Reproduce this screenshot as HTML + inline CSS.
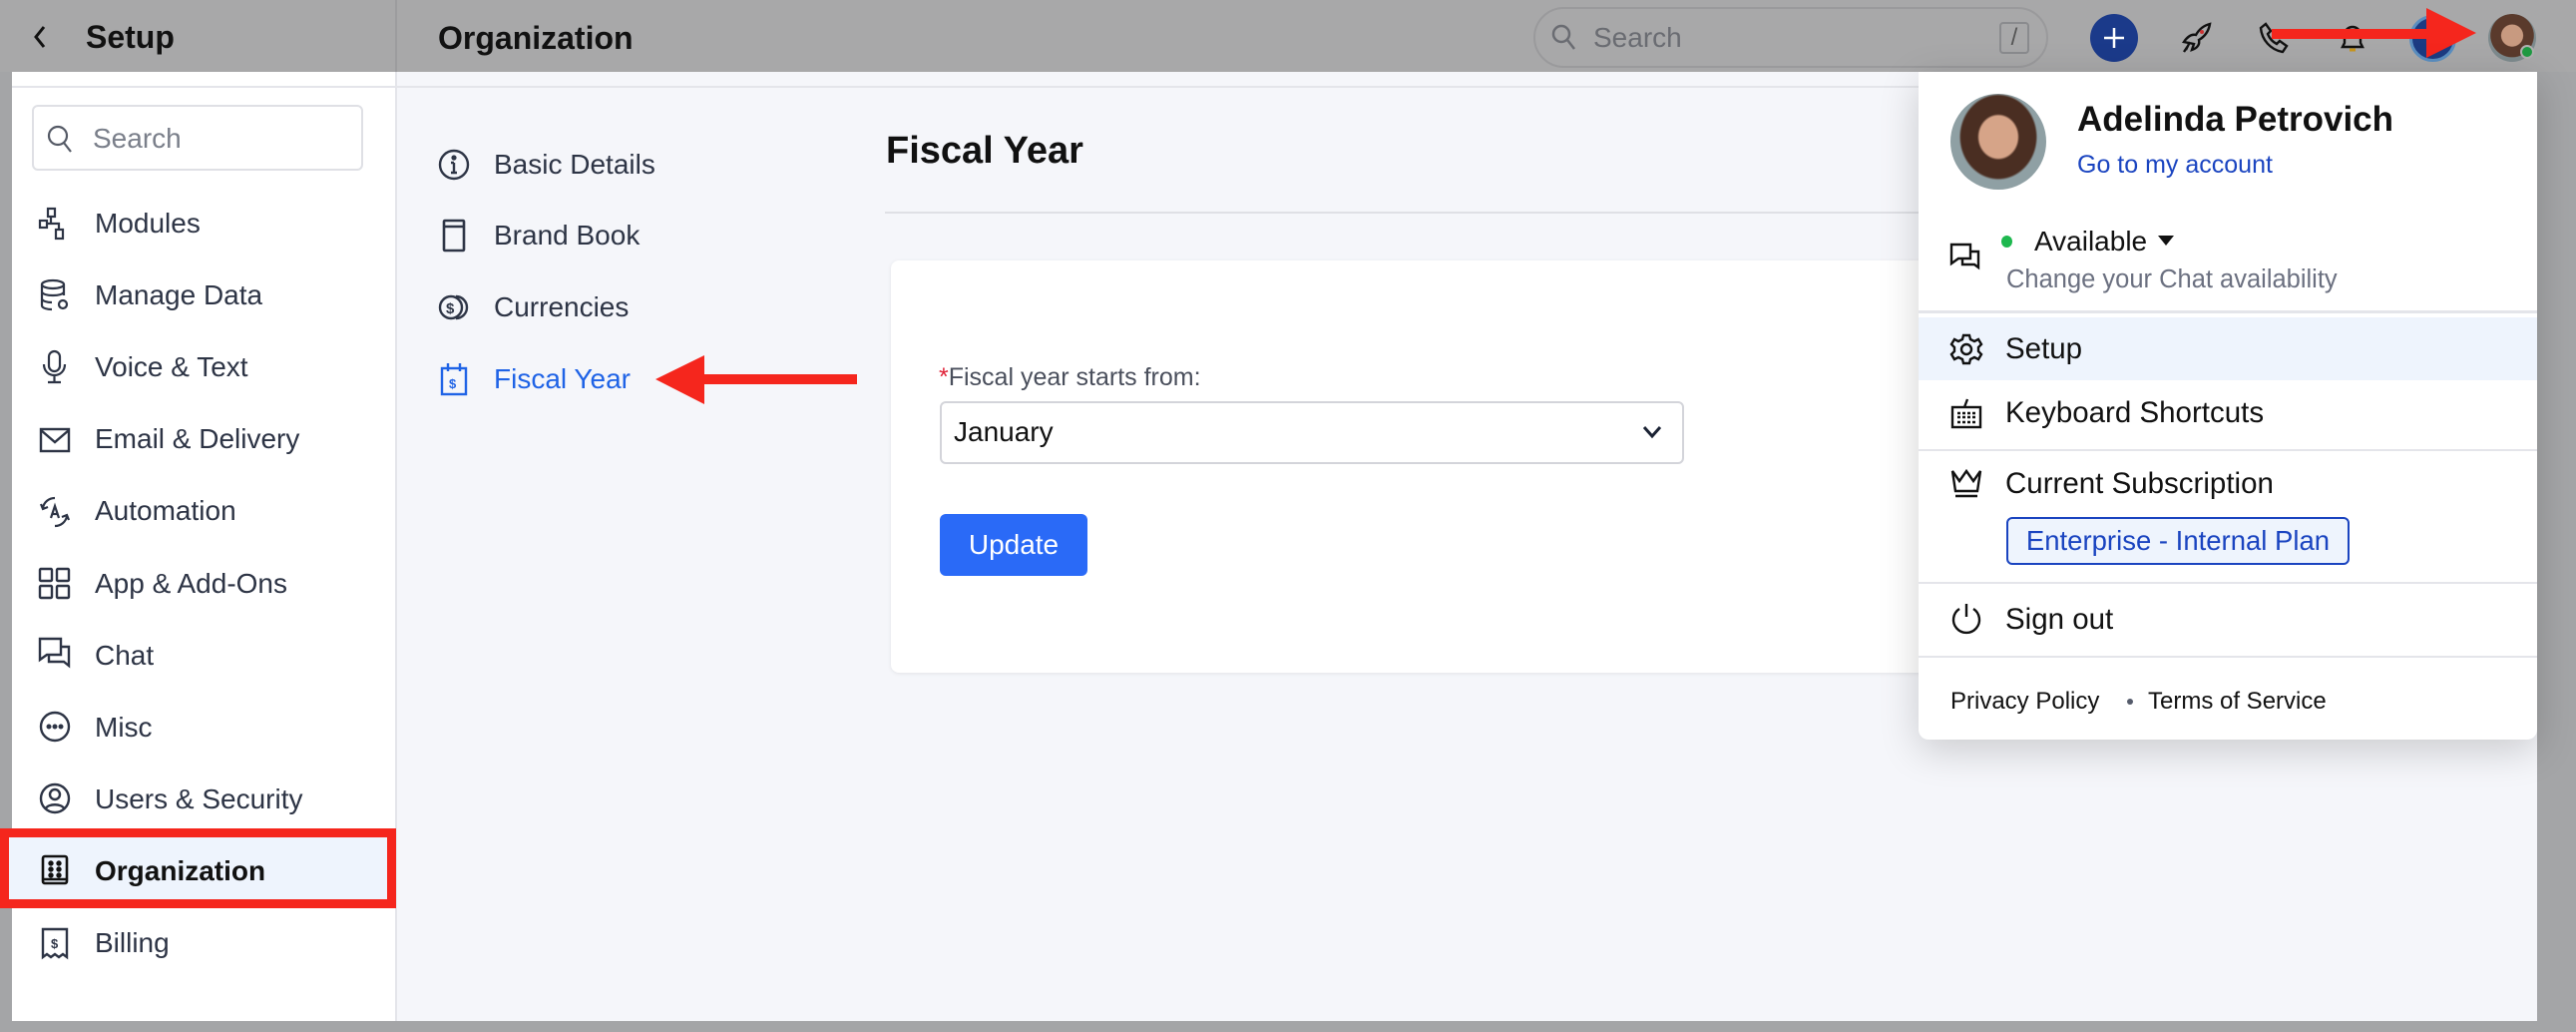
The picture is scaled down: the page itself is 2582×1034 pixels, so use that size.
<!DOCTYPE html>
<html><head><meta charset="utf-8"><style>
*{margin:0;padding:0;box-sizing:border-box}
body{width:2582px;height:1034px;position:relative;overflow:hidden;background:#a4a5a7;font-family:"Liberation Sans",sans-serif;color:#2d3445}
.a{position:absolute}
.it{position:absolute;height:40px;line-height:40px;font-size:28px;white-space:nowrap}
.m{font-size:29.5px}
svg{position:absolute;overflow:visible}
</style></head><body>
<!-- header -->
<div class="a" style="left:0;top:0;width:2582px;height:72px;background:#a8a8a9"></div>
<div class="a" style="left:396px;top:0;width:2px;height:72px;background:#9c9c9e"></div>
<svg style="left:32px;top:24px" width="20" height="26"><path d="M12 3 L4 13 L12 23" fill="none" stroke="#111" stroke-width="3"/></svg>
<div class="it" style="left:86px;top:17px;font-weight:bold;font-size:32px;color:#111">Setup</div>
<div class="it" style="left:439px;top:18px;font-weight:bold;font-size:32px;color:#111">Organization</div>
<div class="a" style="left:1537px;top:7px;width:516px;height:61px;border:2px solid #9a9a9c;border-radius:31px"></div>
<svg style="left:1555px;top:24px" width="26" height="28"><circle cx="10" cy="10" r="8" fill="none" stroke="#6a6c72" stroke-width="2.5"/><path d="M16 16 L23 25" stroke="#6a6c72" stroke-width="2.5"/></svg>
<div class="it" style="left:1597px;top:18px;color:#6a6c72;font-size:28px">Search</div>
<div class="a" style="left:2004px;top:22px;width:30px;height:32px;border:2px solid #8a8b8e;border-radius:4px;color:#555;font-size:24px;text-align:center;line-height:28px">/</div>
<div class="a" style="left:2095px;top:14px;width:48px;height:48px;border-radius:50%;background:#1b3a8a"></div>
<svg style="left:2107px;top:26px" width="24" height="24"><path d="M12 2V22M2 12H22" stroke="#fff" stroke-width="2.5"/></svg>
<svg style="left:2185px;top:22px" width="32" height="32"><path d="M6 28 L10 20 M4 20 C8 14 12 12 16 13 C20 6 26 3 30 2 C29 8 26 14 19 18 C20 22 18 26 12 28 L14 22 Z M8 24 L4 30" fill="none" stroke="#111" stroke-width="2.4"/><circle cx="22" cy="10" r="2" fill="#c33"/></svg>
<svg style="left:2262px;top:22px" width="32" height="32"><path d="M4 6 L9 2 L14 9 L11 12 C13 17 16 20 20 22 L23 19 L30 24 L26 30 C14 28 5 18 4 6Z" fill="none" stroke="#111" stroke-width="2.4"/></svg>
<svg style="left:2343px;top:22px" width="30" height="32"><path d="M5 25 L25 25 L23 21 L23 13 C23 8 19 5 15 5 C11 5 7 8 7 13 L7 21 Z" fill="none" stroke="#111" stroke-width="2.4"/><path d="M12 28 L18 28" stroke="#c8951b" stroke-width="3"/></svg>
<div class="a" style="left:2415px;top:15px;width:47px;height:47px;border-radius:50%;background:#1c3b82;border:3px solid #5a8ec0"></div>
<div class="a" style="left:2277px;top:29px;width:158px;height:10px;background:#f5261d"></div>
<svg style="left:2432px;top:8px" width="52" height="50"><path d="M0 0 L50 25 L0 50Z" fill="#f5261d"/></svg>
<div class="a" style="left:2494px;top:14px;width:48px;height:48px;border-radius:50%;background:radial-gradient(circle at 50% 45%,#c89a80 0 30%,#5a3a2c 32% 60%,#7d8a8d 62%)"></div>
<div class="a" style="left:2526px;top:45px;width:14px;height:14px;border-radius:50%;background:#1e9a42;border:2px solid #b0b0b0"></div>

<!-- sidebar -->
<div class="a" style="left:12px;top:72px;width:385px;height:951px;background:#fff"></div>
<div class="a" style="left:12px;top:86px;width:385px;height:2px;background:#e4e5ea"></div>
<div class="a" style="left:396px;top:72px;width:2px;height:951px;background:#e4e5ea"></div>
<div class="a" style="left:32px;top:105px;width:332px;height:66px;border:2px solid #dfe0e5;border-radius:6px"></div>
<svg style="left:47px;top:125px" width="28" height="30"><circle cx="11" cy="11" r="9" fill="none" stroke="#555a66" stroke-width="2.2"/><path d="M17 18 L24 27" stroke="#555a66" stroke-width="2.2"/></svg>
<div class="it" style="left:93px;top:119px;color:#7a7f8a">Search</div>

<div class="a" style="left:0;top:830px;width:397px;height:80px;background:#eef4fd;border:9px solid #f5261d"></div>

<svg style="left:39px;top:208px" width="32" height="32" fill="none" stroke="#2d3445" stroke-width="2.2"><rect x="9" y="1" width="7" height="8"/><rect x="1" y="13" width="7" height="7"/><rect x="17" y="22" width="7" height="9"/><path d="M8 16H20V22M12 9V16"/></svg>
<div class="it" style="left:95px;top:204px">Modules</div>
<svg style="left:40px;top:280px" width="30" height="32" fill="none" stroke="#2d3445" stroke-width="2.2"><ellipse cx="13" cy="5" rx="11" ry="4"/><path d="M2 5V26C2 29 8 30 12 30M24 5V16M2 12C2 15 8 16 13 16S24 15 24 12M2 19C2 22 8 23 12 23"/><circle cx="23" cy="25" r="4"/></svg>
<div class="it" style="left:95px;top:276px">Manage Data</div>
<svg style="left:42px;top:351px" width="26" height="34" fill="none" stroke="#2d3445" stroke-width="2.2"><rect x="7" y="1" width="11" height="20" rx="5.5"/><path d="M2 14C2 21 7 25 12.5 25S23 21 23 14M12.5 25V32M6 32H19"/></svg>
<div class="it" style="left:95px;top:348px">Voice &amp; Text</div>
<svg style="left:39px;top:428px" width="32" height="26" fill="none" stroke="#2d3445" stroke-width="2.4"><rect x="2" y="2" width="28" height="22"/><path d="M2 3L16 15L30 3"/></svg>
<div class="it" style="left:95px;top:420px">Email &amp; Delivery</div>
<svg style="left:39px;top:497px" width="32" height="32" fill="none" stroke="#2d3445" stroke-width="2.2"><path d="M4 12C5 6 10 2 16 2M28 20C27 26 22 30 16 30M12 22L16 10L20 22M13 18H19M2 8L4 13L9 11M30 24L28 19L23 21"/></svg>
<div class="it" style="left:95px;top:492px">Automation</div>
<svg style="left:39px;top:569px" width="32" height="32" fill="none" stroke="#2d3445" stroke-width="2.4"><rect x="1" y="1" width="12" height="12" rx="1"/><rect x="18" y="1" width="12" height="12" rx="1"/><rect x="1" y="18" width="12" height="12" rx="1"/><rect x="18" y="18" width="12" height="12" rx="1"/></svg>
<div class="it" style="left:95px;top:565px">App &amp; Add-Ons</div>
<svg style="left:39px;top:639px" width="32" height="32" fill="none" stroke="#2d3445" stroke-width="2.4"><path d="M1 1H22V17H8L1 22Z M22 9H30V28L25 24H10V17"/></svg>
<div class="it" style="left:95px;top:637px">Chat</div>
<svg style="left:39px;top:712px" width="32" height="32" fill="none" stroke="#2d3445" stroke-width="2.4"><circle cx="16" cy="16" r="14"/><circle cx="10" cy="16" r="1.3" fill="#2d3445"/><circle cx="16" cy="16" r="1.3" fill="#2d3445"/><circle cx="22" cy="16" r="1.3" fill="#2d3445"/></svg>
<div class="it" style="left:95px;top:709px">Misc</div>
<svg style="left:39px;top:784px" width="32" height="32" fill="none" stroke="#2d3445" stroke-width="2.4"><circle cx="16" cy="16" r="14"/><circle cx="16" cy="12" r="5"/><path d="M7 26C9 21 23 21 25 26"/></svg>
<div class="it" style="left:95px;top:781px">Users &amp; Security</div>
<svg style="left:41px;top:856px" width="28" height="32" fill="none" stroke="#111" stroke-width="2.6"><rect x="2" y="2" width="24" height="27" rx="2"/><path d="M2 25H26" /><circle cx="10" cy="9" r="1.4" fill="#111"/><circle cx="18" cy="9" r="1.4" fill="#111"/><circle cx="10" cy="15" r="1.4" fill="#111"/><circle cx="18" cy="15" r="1.4" fill="#111"/><circle cx="10" cy="21" r="1.4" fill="#111"/><circle cx="18" cy="21" r="1.4" fill="#111"/></svg>
<div class="it" style="left:95px;top:853px;font-weight:bold;color:#111">Organization</div>
<svg style="left:41px;top:929px" width="28" height="32" fill="none" stroke="#2d3445" stroke-width="2.4"><path d="M2 2H26V30L22 27L18 30L14 27L10 30L6 27L2 30Z"/><text x="10" y="21" font-size="13" font-weight="bold" fill="#2d3445" stroke="none" font-family="Liberation Sans">$</text></svg>
<div class="it" style="left:95px;top:925px">Billing</div>

<!-- main -->
<div class="a" style="left:398px;top:72px;width:2145px;height:951px;background:#f5f6fa"></div>
<div class="a" style="left:398px;top:86px;width:2145px;height:2px;background:#e4e5ea"></div>

<svg style="left:439px;top:149px" width="32" height="32" fill="none" stroke="#2d3445" stroke-width="2.4"><circle cx="16" cy="16" r="14"/><path d="M16 14V24M13 24H19M13 14H16"/><circle cx="16" cy="9" r="1.4" fill="#2d3445"/></svg>
<div class="it" style="left:495px;top:145px">Basic Details</div>
<svg style="left:443px;top:219px" width="24" height="34" fill="none" stroke="#2d3445" stroke-width="2.6"><rect x="2" y="2" width="20" height="30" rx="1"/><path d="M2 8H22"/></svg>
<div class="it" style="left:495px;top:216px">Brand Book</div>
<svg style="left:439px;top:292px" width="32" height="32" fill="none" stroke="#2d3445" stroke-width="2.4"><circle cx="13" cy="16" r="11"/><path d="M18 5A11 11 0 0 1 18 27"/><text x="8" y="22" font-size="15" font-weight="bold" fill="#2d3445" stroke="none" font-family="Liberation Sans">$</text></svg>
<div class="it" style="left:495px;top:288px">Currencies</div>
<svg style="left:441px;top:363px" width="28" height="34" fill="none" stroke="#1f63e6" stroke-width="2.4"><rect x="2" y="6" width="24" height="26"/><path d="M8 1V9M20 1V9"/><text x="9" y="26" font-size="13" font-weight="bold" fill="#1f63e6" stroke="none" font-family="Liberation Sans">$</text></svg>
<div class="it" style="left:495px;top:360px;color:#1f63e6">Fiscal Year</div>
<div class="a" style="left:704px;top:375px;width:155px;height:10px;background:#f5261d"></div>
<svg style="left:657px;top:356px" width="50" height="50"><path d="M0 24 L49 0 L49 49Z" fill="#f5261d"/></svg>

<div class="it" style="left:888px;top:128px;font-weight:bold;font-size:38px;color:#111;height:46px;line-height:46px">Fiscal Year</div>
<div class="a" style="left:887px;top:212px;width:1060px;height:2px;background:#dfe0e5"></div>
<div class="a" style="left:893px;top:261px;width:1200px;height:413px;background:#fff;border-radius:8px;box-shadow:0 1px 4px rgba(0,0,0,.08)"></div>
<div class="it" style="left:941px;top:358px;font-size:25px;color:#4a4f5c"><span style="color:#e0243a">*</span>Fiscal year starts from:</div>
<div class="a" style="left:942px;top:402px;width:746px;height:63px;border:2px solid #d3d4da;border-radius:6px;background:#fff"></div>
<div class="it" style="left:956px;top:413px;color:#111">January</div>
<svg style="left:1646px;top:424px" width="20" height="18"><path d="M2 4L10 13L18 4" fill="none" stroke="#1a2233" stroke-width="3"/></svg>
<div class="a" style="left:942px;top:515px;width:148px;height:62px;background:#2a6af7;border-radius:6px;color:#fff;font-size:28px;line-height:62px;text-align:center">Update</div>

<!-- dropdown -->
<div class="a" style="left:1923px;top:72px;width:620px;height:669px;background:#fff;border-radius:0 0 10px 10px;box-shadow:0 10px 40px rgba(0,0,0,.18)"></div>
<div class="a" style="left:1955px;top:94px;width:96px;height:96px;border-radius:50%;background:radial-gradient(ellipse at 50% 45%,#d6a488 0 28%,#4a2e22 31% 55%,#8fa0a4 58%)"></div>
<div class="it" style="left:2082px;top:100px;font-weight:bold;font-size:35px;color:#111">Adelinda Petrovich</div>
<div class="it" style="left:2082px;top:145px;font-size:25px;color:#1a44c0">Go to my account</div>
<div class="a" style="left:2006px;top:236px;width:11px;height:12px;border-radius:50%;background:#1eb84f"></div>
<div class="it" style="left:2039px;top:222px;color:#111">Available</div>
<svg style="left:2163px;top:236px" width="16" height="12"><path d="M0 0H16L8 10Z" fill="#111"/></svg>
<svg style="left:1955px;top:244px" width="32" height="32" fill="none" stroke="#111" stroke-width="2.4"><path d="M1 1H20V15H8L1 20Z M20 8H28V24L24 21H12V15"/></svg>
<div class="it" style="left:2011px;top:260px;font-size:25.5px;color:#6b7080">Change your Chat availability</div>
<div class="a" style="left:1923px;top:311px;width:620px;height:3px;background:#e4e5ea"></div>
<div class="a" style="left:1923px;top:318px;width:620px;height:63px;background:#eef4fd"></div>
<svg style="left:1955px;top:334px" width="32" height="32" fill="none" stroke="#111" stroke-width="2.4"><path d="M13 2H19L20 6L24 8L28 6L31 11L28 14V18L31 21L28 26L24 24L20 26L19 30H13L12 26L8 24L4 26L1 21L4 18V14L1 11L4 6L8 8L12 6Z"/><circle cx="16" cy="16" r="5"/></svg>
<div class="it m" style="left:2010px;top:330px;color:#111">Setup</div>
<svg style="left:1955px;top:398px" width="32" height="32" fill="none" stroke="#111" stroke-width="2.4"><rect x="2" y="10" width="28" height="20"/><path d="M14 10L17 2"/><path d="M7 16H25M7 20H25M7 25H25" stroke-dasharray="3 2"/></svg>
<div class="it m" style="left:2010px;top:394px;color:#111">Keyboard Shortcuts</div>
<div class="a" style="left:1923px;top:450px;width:620px;height:2px;background:#e4e5ea"></div>
<svg style="left:1955px;top:470px" width="32" height="30" fill="none" stroke="#111" stroke-width="2.4"><path d="M2 2L9 12L16 2L23 12L30 2L27 22H5Z M5 27H27"/></svg>
<div class="it m" style="left:2010px;top:465px;color:#111">Current Subscription</div>
<div class="a" style="left:2011px;top:518px;width:344px;height:48px;border:2px solid #1a44c0;border-radius:6px;background:#eef4fd;color:#1a44c0;font-size:27.5px;line-height:44px;text-align:center">Enterprise - Internal Plan</div>
<div class="a" style="left:1923px;top:583px;width:620px;height:2px;background:#e4e5ea"></div>
<svg style="left:1955px;top:604px" width="32" height="34" fill="none" stroke="#111" stroke-width="2.4"><path d="M16 1V14M9 6A13 13 0 1 0 23 6"/></svg>
<div class="it m" style="left:2010px;top:601px;color:#111">Sign out</div>
<div class="a" style="left:1923px;top:657px;width:620px;height:2px;background:#e4e5ea"></div>
<div class="it" style="left:1955px;top:683px;font-size:24px;color:#111">Privacy Policy</div>
<div class="a" style="left:2132px;top:700px;width:6px;height:6px;border-radius:50%;background:#555b6b"></div>
<div class="it" style="left:2153px;top:683px;font-size:24px;color:#111">Terms of Service</div>
</body></html>
